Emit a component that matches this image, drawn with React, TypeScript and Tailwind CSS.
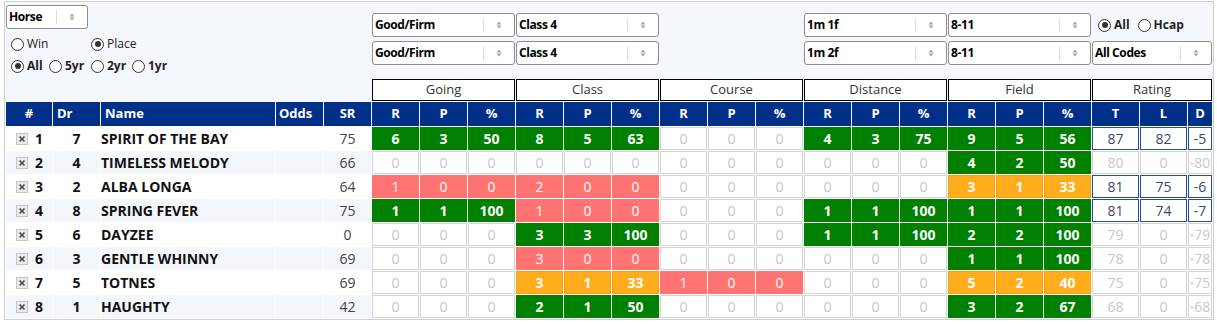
import React from "react";

type Tone = "g" | "r" | "o" | "z";
type Stat = [number, number, number, Tone];

const Z: Stat = [0, 0, 0, "z"];

type Row = {
  no: number;
  dr: number;
  name: string;
  sr: number;
  stats: Stat[];
  rating: [number, number, number];
  rated: boolean;
};

const rows: Row[] = [
  { no: 1, dr: 7, name: "SPIRIT OF THE BAY", sr: 75, stats: [[6, 3, 50, "g"], [8, 5, 63, "g"], Z, [4, 3, 75, "g"], [9, 5, 56, "g"]], rating: [87, 82, -5], rated: true },
  { no: 2, dr: 4, name: "TIMELESS MELODY", sr: 66, stats: [Z, Z, Z, Z, [4, 2, 50, "g"]], rating: [80, 0, -80], rated: false },
  { no: 3, dr: 2, name: "ALBA LONGA", sr: 64, stats: [[1, 0, 0, "r"], [2, 0, 0, "r"], Z, Z, [3, 1, 33, "o"]], rating: [81, 75, -6], rated: true },
  { no: 4, dr: 8, name: "SPRING FEVER", sr: 75, stats: [[1, 1, 100, "g"], [1, 0, 0, "r"], Z, [1, 1, 100, "g"], [1, 1, 100, "g"]], rating: [81, 74, -7], rated: true },
  { no: 5, dr: 6, name: "DAYZEE", sr: 0, stats: [Z, [3, 3, 100, "g"], Z, [1, 1, 100, "g"], [2, 2, 100, "g"]], rating: [79, 0, -79], rated: false },
  { no: 6, dr: 3, name: "GENTLE WHINNY", sr: 69, stats: [Z, [3, 0, 0, "r"], Z, Z, [1, 1, 100, "g"]], rating: [78, 0, -78], rated: false },
  { no: 7, dr: 5, name: "TOTNES", sr: 69, stats: [Z, [3, 1, 33, "o"], [1, 0, 0, "r"], Z, [5, 2, 40, "o"]], rating: [75, 0, -75], rated: false },
  { no: 8, dr: 1, name: "HAUGHTY", sr: 42, stats: [Z, [2, 1, 50, "g"], Z, Z, [3, 2, 67, "g"]], rating: [68, 0, -68], rated: false },
];

const toneCls: Record<Tone, string> = {
  g: "bg-[#008000] text-white font-bold",
  r: "bg-[#ff7373] text-white",
  o: "bg-[#ffad1d] border border-[#f2a20a] text-white font-bold",
  z: "bg-white border border-[#d4d4d4] text-[#c8c8c8]",
};

const cols = "grid-cols-[46px_47px_174px_47px_47px_repeat(17,47px)_24px]";

function Arrows() {
  return (
    <svg width="6" height="10" viewBox="0 0 6 10">
      <path d="M3 1.5L5.5 4.5H0.5Z M3 8.5L0.5 5.5H5.5Z" fill="#a8a8a8" />
    </svg>
  );
}

function Select({ value, className = "" }: { value: string; className?: string }) {
  return (
    <div className={`flex h-[24px] items-center rounded-[3px] border border-[#8c8c8c] bg-white ${className}`}>
      <span className="flex-1 truncate pl-[2px] text-[12px] font-bold tracking-[-0.4px] text-black">{value}</span>
      <span className="h-[14px] w-px bg-[#dcdcdc]" />
      <span className="flex w-[30px] justify-center">
        <Arrows />
      </span>
    </div>
  );
}

function Radio({ label, checked, bold, className = "" }: { label: string; checked?: boolean; bold?: boolean; className?: string }) {
  return (
    <span className={`flex items-center gap-[3px] text-[12px] text-[#222] ${className}`}>
      <span className="flex h-[13px] w-[13px] items-center justify-center rounded-full border border-[#333] bg-white">
        {checked && <span className="h-[6px] w-[6px] rounded-full bg-[#333]" />}
      </span>
      <span className={bold ? "font-bold" : ""}>{label}</span>
    </span>
  );
}

function RemoveBox() {
  return (
    <svg width="12" height="12" viewBox="0 0 12 12">
      <rect x="0.5" y="0.5" width="11" height="11" fill="#ebebeb" stroke="#c6c6c6" />
      <path d="M3.5 3.5l5 5M8.5 3.5l-5 5" stroke="#4a4a4a" strokeWidth="1.7" />
    </svg>
  );
}

const groups = ["Going", "Class", "Course", "Distance", "Field", "Rating"];

export default function App() {
  return (
    <div className="h-[325px] w-[1217px] bg-white pl-[4px] pt-px font-['Open_Sans',sans-serif]">
      <div className="w-[1210px] border border-[#cfcfcf] bg-[#f4f7fb]">
        {/* filters + group titles */}
        <div className={`grid ${cols} grid-rows-[77px_22px] gap-x-px px-px`}>
          <div className="col-span-5 flex flex-col">
            <Select value="Horse" className="mt-[3px] w-[82px]" />
            <div className="mt-[6px] flex h-[18px] items-center pl-[5px]">
              <Radio label="Win" className="w-[80px]" />
              <Radio label="Place" checked />
            </div>
            <div className="mt-[4px] flex h-[18px] items-center pl-[5px]">
              <Radio label="All" checked bold className="w-[38px]" />
              <Radio label="5yr" bold className="w-[42px]" />
              <Radio label="2yr" bold className="w-[41px]" />
              <Radio label="1yr" bold />
            </div>
          </div>
          <div className="col-span-3 flex flex-col gap-[4px] pt-[11px]">
            <Select value="Good/Firm" />
            <Select value="Good/Firm" />
          </div>
          <div className="col-span-3 flex flex-col gap-[4px] pt-[11px]">
            <Select value="Class 4" />
            <Select value="Class 4" />
          </div>
          <div className="col-span-3" />
          <div className="col-span-3 flex flex-col gap-[4px] pt-[11px]">
            <Select value="1m 1f" />
            <Select value="1m 2f" />
          </div>
          <div className="col-span-3 flex flex-col gap-[4px] pt-[11px]">
            <Select value="8-11" />
            <Select value="8-11" />
          </div>
          <div className="col-span-3 flex flex-col gap-[4px] pt-[11px]">
            <div className="flex h-[24px] items-center gap-[8px] pl-[6px]">
              <Radio label="All" checked bold />
              <Radio label="Hcap" bold />
            </div>
            <Select value="All Codes" />
          </div>

          <div className="col-span-5" />
          {groups.map((g) => (
            <div key={g} className="col-span-3 flex items-center justify-center border border-black bg-white text-[13px] text-[#333]">
              {g}
            </div>
          ))}
        </div>

        {/* table */}
        <div className={`grid ${cols} grid-rows-[24px_repeat(8,23px)] gap-px bg-white p-px text-[14px]`}>
          <div className="flex items-center justify-center bg-[#003087] text-[13px] font-bold text-white">#</div>
          <div className="flex items-center bg-[#003087] pl-[4px] text-[13px] font-bold text-white">Dr</div>
          <div className="flex items-center bg-[#003087] pl-[4px] text-[13px] font-bold text-white">Name</div>
          <div className="flex items-center bg-[#003087] pl-[3px] text-[13px] font-bold text-white">Odds</div>
          <div className="flex items-center justify-center bg-[#003087] text-[13px] font-bold text-white">SR</div>
          {[0, 1, 2, 3, 4].flatMap((i) =>
            ["R", "P", "%"].map((h) => (
              <div key={`${i}${h}`} className="flex items-center justify-center bg-[#003087] text-[13px] font-bold text-white">
                {h}
              </div>
            ))
          )}
          {["T", "L", "D"].map((h) => (
            <div key={h} className="flex items-center justify-center bg-[#003087] text-[13px] font-bold text-white">
              {h}
            </div>
          ))}

          {rows.map((r, idx) => {
            const bg = idx % 2 === 1 ? "bg-[#f3f6fb]" : "bg-white";
            const rate = r.rated
              ? "border border-[#1f4e96] text-[#3a4866]"
              : "border border-[#d4d4d4] text-[#c8c8c8]";
            return (
              <React.Fragment key={r.no}>
                <div className={`flex items-center gap-[7px] pl-[10px] font-bold text-[#111] ${bg}`}>
                  <RemoveBox />
                  {r.no}
                </div>
                <div className={`flex items-center justify-center font-bold text-[#111] ${bg}`}>{r.dr}</div>
                <div className={`flex items-center font-bold text-[#111] ${bg}`}>{r.name}</div>
                <div className={bg} />
                <div className={`flex items-center justify-center text-[#444] ${bg}`}>{r.sr}</div>
                {r.stats.flatMap((s, si) =>
                  [s[0], s[1], s[2]].map((v, vi) => (
                    <div key={`${si}-${vi}`} className={`flex items-center justify-center ${toneCls[s[3]]}`}>
                      {v}
                    </div>
                  ))
                )}
                {r.rating.map((v, vi) => (
                  <div key={`rt${vi}`} className={`flex items-center justify-center overflow-hidden bg-white ${rate}`}>
                    {v}
                  </div>
                ))}
              </React.Fragment>
            );
          })}
        </div>
      </div>
    </div>
  );
}
